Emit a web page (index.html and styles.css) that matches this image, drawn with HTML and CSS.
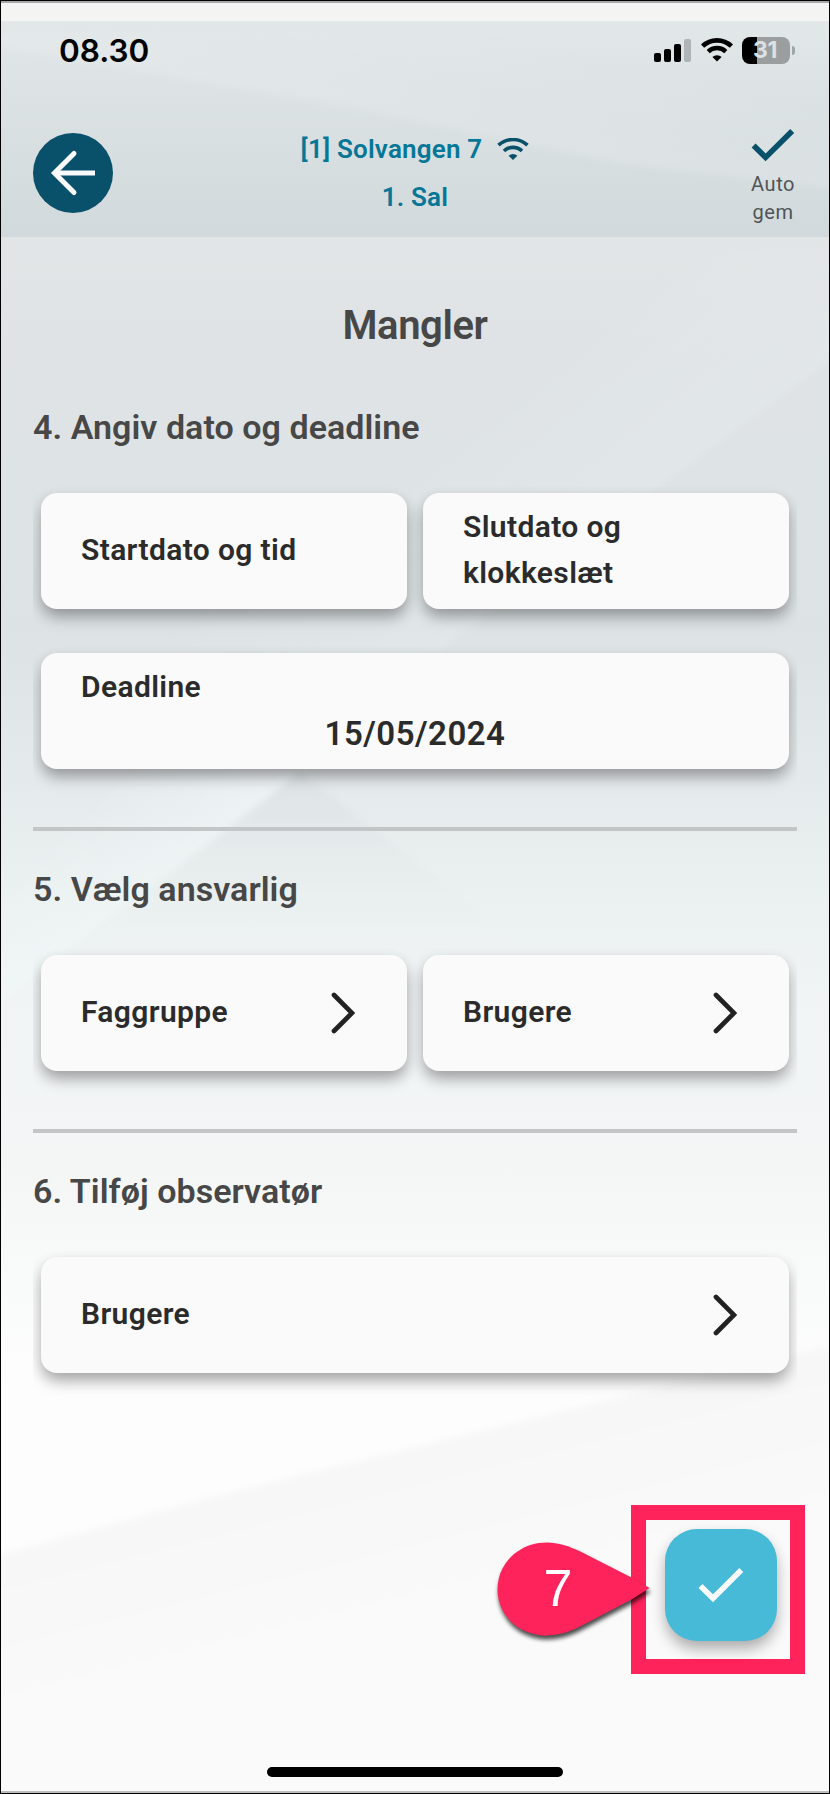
FILE: index.html
```html
<!DOCTYPE html>
<html lang="da">
<head>
<meta charset="utf-8">
<title>Mangler</title>
<link rel="stylesheet" href="styles.css">
</head>
<body>
<div class="phone">
  <svg class="backdrop" viewBox="0 0 830 1794" preserveAspectRatio="none" aria-hidden="true">
    <defs>
      <linearGradient id="base" x1="0" y1="0" x2="0" y2="1">
        <stop offset="0" stop-color="#f5f4f4"/>
        <stop offset=".0117" stop-color="#f4f4f3"/>
        <stop offset=".0117" stop-color="#e2e7e8"/>
        <stop offset=".132" stop-color="#d1d9dc"/>
        <stop offset=".132" stop-color="#e2e5e6"/>
        <stop offset=".2" stop-color="#dfe3e5"/>
        <stop offset=".35" stop-color="#dde3e5"/>
        <stop offset=".43" stop-color="#e4e9eb"/>
        <stop offset=".5" stop-color="#ebf0f0"/>
        <stop offset=".56" stop-color="#f0f4f5"/>
        <stop offset=".65" stop-color="#f4f6f6"/>
        <stop offset=".7" stop-color="#f8f9f9"/>
        <stop offset=".77" stop-color="#fdfdfd"/>
        <stop offset="1" stop-color="#fdfdfd"/>
      </linearGradient>
      <linearGradient id="floor" gradientUnits="userSpaceOnUse" x1="380" y1="1440" x2="430" y2="1640">
        <stop offset="0" stop-color="#f7f7f7"/>
        <stop offset="1" stop-color="#fafafa"/>
      </linearGradient>
      <linearGradient id="peak" x1="0" y1="0" x2="0" y2="1">
        <stop offset="0" stop-color="#d3dadd" stop-opacity=".4"/>
        <stop offset="1" stop-color="#e6eaea" stop-opacity="0"/>
      </linearGradient>
      <linearGradient id="glow" gradientUnits="userSpaceOnUse" x1="60" y1="830" x2="190" y2="960">
        <stop offset="0" stop-color="#f3f9fa" stop-opacity="0"/>
        <stop offset="1" stop-color="#f3f9fa" stop-opacity=".8"/>
      </linearGradient>
      <linearGradient id="slope" gradientUnits="userSpaceOnUse" x1="640" y1="500" x2="540" y2="365">
        <stop offset="0" stop-color="#e8eef0" stop-opacity=".35"/>
        <stop offset="1" stop-color="#e8eef0" stop-opacity="0"/>
      </linearGradient>
      <linearGradient id="streak" gradientUnits="userSpaceOnUse" x1="400" y1="20" x2="375" y2="140">
        <stop offset="0" stop-color="#e7ebed" stop-opacity="0"/>
        <stop offset="1" stop-color="#e7ebed" stop-opacity=".5"/>
      </linearGradient>
      <filter id="soft"><feGaussianBlur stdDeviation="3"/></filter>
    </defs>
    <rect width="830" height="1794" fill="url(#base)"/>
    <g filter="url(#soft)">
      <path d="M-20 32H850V190L620 163L345 106L-20 44Z" fill="url(#streak)"/>
      <path d="M850 345L640 500L440 650H0V250H850Z" fill="url(#slope)"/>
      <path d="M-20 1019L80 940L298 773H-20Z" fill="url(#glow)"/>
      <path d="M300 772L80 950H530Z" fill="url(#peak)"/>
      <path d="M-20 1560L200 1500L415 1447L850 1341V1820H-20Z" fill="url(#floor)"/>
    </g>
  </svg>

  <div class="statusbar">
    <span class="clock">08.30</span>
    <div class="indicators">
      <svg class="signal" viewBox="0 0 37 23">
        <rect x="0" y="14" width="7" height="9" rx="2"/>
        <rect x="10" y="10" width="7" height="13" rx="2"/>
        <rect x="20" y="5" width="7" height="18" rx="2"/>
        <rect x="30" y="0" width="7" height="23" rx="2" fill="#afb5b6"/>
      </svg>
      <svg class="wifi" viewBox="0 0 32 24" fill="none" stroke="#000">
        <path d="M1.6 8.2A20.6 20.6 0 0 1 30.4 8.2" stroke-width="4.6"/>
        <path d="M7.2 13.6A12.7 12.7 0 0 1 24.8 13.6" stroke-width="4.4"/>
        <path d="M16 23.6L11.4 19A6.6 6.6 0 0 1 20.6 19Z" fill="#000" stroke="none"/>
      </svg>
      <div class="battery"><span class="level">31</span></div>
    </div>
  </div>

  <header class="topbar">
    <button class="back" aria-label="Tilbage">
      <svg viewBox="0 0 80 80" fill="none" stroke="#fafafa" stroke-width="5">
        <path d="M62 40H21"/>
        <path d="M41 20.500L21.500 40L41 59.500" stroke-linecap="round"/>
      </svg>
    </button>
    <div class="place">
      <div class="site"><span>[1] Solvangen 7</span>
        <svg class="net" viewBox="0 0 32 22" fill="none" stroke="#09506a">
          <path d="M1.500 7.200A21.500 21.500 0 0 1 30.500 7.200" stroke-width="3.600"/>
          <path d="M7 13A13 13 0 0 1 25 13" stroke-width="3.600"/>
          <path d="M16 22L11.600 17.700A6.600 6.600 0 0 1 20.400 17.700Z" fill="#09506a" stroke="none"/>
        </svg>
      </div>
      <div class="floor">1. Sal</div>
    </div>
    <div class="autosave">
      <svg viewBox="0 0 44 34" fill="none" stroke="#09506a" stroke-width="5.6"><path d="M2.6 17.4L14.6 29.4L41.2 3"/></svg>
      <div>Auto<br>gem</div>
    </div>
  </header>

  <main class="content">
    <h1 class="title">Mangler</h1>

    <section class="step">
      <h2 class="heading">4. Angiv dato og deadline</h2>
      <div class="row">
        <div class="card"><span class="label">Startdato og tid</span></div>
        <div class="card"><span class="label">Slutdato og<br>klokkeslæt</span></div>
      </div>
      <div class="row row-last">
        <div class="card card-stack"><span class="label">Deadline</span><span class="value">15/05/2024</span></div>
      </div>
    </section>

    <section class="step ruled">
      <h2 class="heading">5. Vælg ansvarlig</h2>
      <div class="row row-last">
        <div class="card"><span class="label">Faggruppe</span>
          <svg class="chevron" viewBox="0 0 24 42"><path d="M3 3L21 21L3 39"/></svg></div>
        <div class="card"><span class="label">Brugere</span>
          <svg class="chevron" viewBox="0 0 24 42"><path d="M3 3L21 21L3 39"/></svg></div>
      </div>
    </section>

    <section class="step ruled">
      <h2 class="heading">6. Tilføj observatør</h2>
      <div class="row">
        <div class="card"><span class="label">Brugere</span>
          <svg class="chevron" viewBox="0 0 24 42"><path d="M3 3L21 21L3 39"/></svg></div>
      </div>
    </section>
  </main>

  <div class="actions">
    <div class="highlight">
      <button class="confirm" aria-label="Gem">
        <svg viewBox="0 0 112 112" fill="none" stroke="#fafafa" stroke-width="5.600"><path d="M35.500 57L48 69.300L76.300 41"/></svg>
      </button>
      <div class="marker">
        <svg viewBox="0 0 154 95"><path d="M152.500 46L134.500 35.500L84 9.800C72 4 61 .5 50 .5C22 .5 .5 21 .5 47.500C.5 73.500 22 93.500 50 93.500C61 93.500 72 90 84 84L134.500 57.500Z"/></svg>
        <span class="number">7</span>
      </div>
    </div>
  </div>
  <div class="home"></div>
</div>
</body>
</html>
```

FILE: styles.css
```css
* { box-sizing: border-box; }
body { margin: 0; font-family: Roboto, "Liberation Sans", sans-serif; }
h1, h2 { margin: 0; }
button { border: 0; padding: 0; }
svg { display: block; }

.phone {
  position: relative;
  width: 830px;
  height: 1794px;
  padding: 21px 1px 0;
  overflow: hidden;
  display: flex;
  flex-direction: column;
}
.phone::after {
  content: "";
  position: absolute;
  inset: 0;
  border: 1px solid #000;
  box-shadow: inset 0 2px #aaa7a8, inset 0 -2px #bdbdbd;
  pointer-events: none;
}
.backdrop { position: absolute; inset: 0; width: 830px; height: 1794px; }
.statusbar, .topbar, .content, .actions, .home { position: relative; }

.statusbar {
  height: 84px;
  padding: 16px 34px 0 58px;
  display: flex;
  justify-content: space-between;
}
.clock { font: 600 31.5px/28px Inter, sans-serif; color: #000; }
.indicators { display: flex; align-items: flex-start; }
.signal { width: 37px; height: 23px; margin-top: 2px; }
.wifi { width: 32px; height: 24px; margin: 1px 0 0 10px; }
.battery {
  position: relative;
  width: 48px;
  height: 27px;
  margin: 0 5px 0 9px;
  border-radius: 8px;
  background: linear-gradient(90deg, #000 15px, #9a9e9f 15px);
  text-align: center;
}
.battery::after {
  content: "";
  position: absolute;
  left: 50px;
  top: 9px;
  width: 3px;
  height: 9px;
  border-radius: 0 5px 5px 0;
  background: #a0a5a6;
}
.level { display: block; font: 700 23px/27px Inter, sans-serif; color: #dce1e3; letter-spacing: -.3px; padding-right: 2px; }

.topbar {
  height: 132px;
  padding: 0 34px 0 32px;
  display: grid;
  grid-template-columns: 80px 1fr 44px;
}
.back { width: 80px; height: 80px; margin-top: 28px; border-radius: 50%; background: #09506a; }
.place {
  padding: 20px 34px 0 0;
  color: #067796;
  font-size: 26px;
  font-weight: 600;
  line-height: 48px;
  letter-spacing: .2px;
  text-align: center;
}
.site { display: flex; justify-content: center; align-items: center; gap: 15px; }
.site span { white-space: nowrap; }
.net { width: 32px; height: 22px; }
.autosave {
  padding-top: 23px;
  color: #505456;
  font-size: 20px;
  font-weight: 400;
  line-height: 28px;
  letter-spacing: .6px;
  text-align: center;
}
.autosave svg { width: 44px; height: 34px; margin-bottom: 8px; }

.content { padding: 59px 32px 0; }
.title { font-size: 40px; font-weight: 600; line-height: 60px; letter-spacing: -.4px; text-align: center; color: #474747; }
.heading {
  height: 120px;
  padding-top: 46px;
  font-size: 34px;
  font-weight: 600;
  line-height: 50px;
  letter-spacing: .05px;
  color: #474747;
  white-space: nowrap;
}
.row { display: flex; gap: 16px; height: 160px; padding: 17px 8px 27px; overflow: hidden; }
.row-last { height: 191px; }
.ruled { border-top: 4px solid #c3c6c7; }
.ruled .heading { height: 107px; padding-top: 33px; }
.card {
  flex: 1;
  height: 116px;
  padding: 0 52px 2px 40px;
  border-radius: 16px;
  background: #fafafa;
  box-shadow: 0 10px 16px -2px rgba(0,0,0,.26), 0 5px 14px rgba(0,0,0,.14);
  display: flex;
  align-items: center;
  justify-content: space-between;
  color: #2b2b2b;
}
.label { font-size: 30px; font-weight: 600; line-height: 46px; letter-spacing: .37px; white-space: nowrap; }
.card-stack { flex-direction: column; align-items: stretch; justify-content: flex-start; padding: 11px 40px 0; }
.value { font-size: 33px; font-weight: 600; line-height: 48px; text-align: center; letter-spacing: .5px; }
.chevron { width: 24px; height: 42px; margin-top: 2px; fill: none; stroke: #222; stroke-width: 4.7; stroke-linecap: round; }

.actions { display: flex; justify-content: flex-end; padding-right: 24px; margin-top: 105px; }
.highlight { position: relative; width: 174px; height: 169px; border: 15px solid #ff235b; padding: 9px 0 0 19px; }
.confirm {
  width: 112px;
  height: 112px;
  border-radius: 32px;
  background: #46bad7;
  box-shadow: 0 10px 16px -2px rgba(0,0,0,.24), 0 5px 14px rgba(0,0,0,.12);
}
.marker { position: absolute; left: -149px; top: 22px; width: 154px; height: 95px; }
.marker svg { width: 154px; height: 95px; overflow: visible; fill: #ff235b; filter: drop-shadow(1px 4px 2px rgba(0,0,0,.7)); }
.number {
  position: absolute;
  left: 0;
  top: 16px;
  width: 122px;
  text-align: center;
  color: #fff;
  font: 52px/60px "Liberation Sans", sans-serif;
}
.home { width: 296px; height: 10px; margin: 93px auto 0; border-radius: 5px; background: #000; }
```
